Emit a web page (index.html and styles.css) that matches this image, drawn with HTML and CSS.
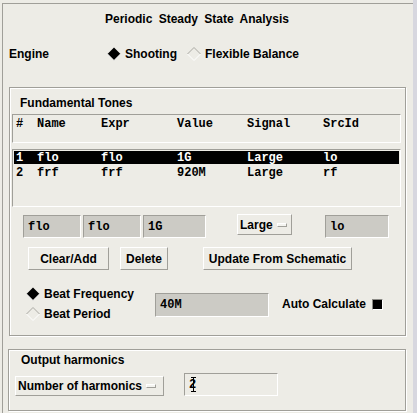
FILE: index.html
```html
<!DOCTYPE html>
<html>
<head>
<meta charset="utf-8">
<link rel="stylesheet" href="styles.css">
</head>
<body>
<div class="screen">
  <div class="main">
    <div class="panel">
      <div class="title">Periodic Steady State Analysis</div>
      <div class="engine">
        <span class="engine-label">Engine</span>
        <span class="radio">
          <svg class="dia" width="14" height="14" viewBox="0 0 14 14"><polygon points="7,0.5 13.5,7 7,13.5 0.5,7" fill="#000"/><polyline points="0.5,7 7,13.5 13.5,7" fill="none" stroke="#fff"/></svg>
          <span>Shooting</span>
        </span>
        <span class="radio flex">
          <svg class="dia" width="14" height="14" viewBox="0 0 14 14"><polyline points="0.5,7 7,0.5 13.5,7" fill="none" stroke="#a9a8a2"/><polyline points="0.5,7 7,13.5 13.5,7" fill="none" stroke="#fff"/></svg>
          <span>Flexible Balance</span>
        </span>
      </div>

      <div class="group tones">
        <div class="legend">Fundamental Tones</div>
        <div class="hdr sunken">
          <div class="trow"><span>#</span><span>Name</span><span>Expr</span><span>Value</span><span>Signal</span><span>SrcId</span></div>
        </div>
        <div class="list sunken">
          <div class="trow selrow"><span>1</span><span>flo</span><span>flo</span><span>1G</span><span>Large</span><span>lo</span></div>
          <div class="trow"><span>2</span><span>frf</span><span>frf</span><span>920M</span><span>Large</span><span>rf</span></div>
        </div>
        <div class="fields">
          <span class="field w58">flo</span>
          <span class="field w58">flo</span>
          <span class="field w63">1G</span>
          <span class="menu mlarge">Large<i class="ind"></i></span>
          <span class="field wlo">lo</span>
        </div>
        <div class="buttons">
          <span class="btn bclear">Clear/Add</span>
          <span class="btn bdel">Delete</span>
          <span class="btn bupd">Update From Schematic</span>
        </div>
        <div class="beat">
          <div class="beat-radios">
            <span class="radio">
              <svg class="dia" width="14" height="14" viewBox="0 0 14 14"><polygon points="7,0.5 13.5,7 7,13.5 0.5,7" fill="#000"/><polyline points="0.5,7 7,13.5 13.5,7" fill="none" stroke="#fff"/></svg>
              <span>Beat Frequency</span>
            </span>
            <span class="radio">
              <svg class="dia" width="14" height="14" viewBox="0 0 14 14"><polyline points="0.5,7 7,0.5 13.5,7" fill="none" stroke="#a9a8a2"/><polyline points="0.5,7 7,13.5 13.5,7" fill="none" stroke="#fff"/></svg>
              <span>Beat Period</span>
            </span>
          </div>
          <span class="field wbeat">40M</span>
          <span class="auto">Auto Calculate<i class="check"></i></span>
        </div>
      </div>

      <div class="group out">
        <div class="legend">Output harmonics</div>
        <div class="outrow">
          <span class="menu mharm">Number of harmonics<i class="ind"></i></span>
          <span class="field edit">2<i class="ibeam"></i></span>
        </div>
      </div>
    </div>
  </div>
  <div class="strip"></div>
</div>
</body>
</html>
```

FILE: styles.css
```css
* { box-sizing: border-box; }
html, body { margin: 0; padding: 0; }
body {
  width: 417px;
  height: 413px;
  overflow: hidden;
  background: #edece6;
  font-family: "Liberation Sans", Arial, sans-serif;
  font-weight: bold;
  font-size: 12px;
  color: #000;
}
.screen { display: flex; width: 417px; height: 413px; }
.main { width: 413px; height: 413px; padding: 3px 0 0 2px; }
.strip { flex: 1; background: #d7d7df; }
.panel {
  height: 410px;
  border-top: 1px solid #a09f99;
  border-left: 1px solid #a09f99;
}
.title {
  margin-top: 8px;
  height: 14px;
  line-height: 14px;
  padding-left: 102px;
  word-spacing: 3px;
  white-space: nowrap;
}
.engine {
  margin-top: 21px;
  height: 14px;
  line-height: 14px;
  display: flex;
  align-items: center;
  padding-left: 6px;
}
.engine-label { width: 98px; }
.radio { display: flex; align-items: center; gap: 4px; white-space: nowrap; }
.radio.flex { margin-left: 10px; }
.dia { display: block; flex: none; }

.group {
  margin-left: 6px;
  width: 397px;
  border: 1px solid #a09f99;
  box-shadow: 1px 1px 0 #fff, inset 1px 1px 0 #fff;
}
.tones { margin-top: 26px; height: 249px; }
.out { margin-top: 13px; height: 62px; margin-left: 5px; width: 398px; }
.legend { line-height: 14px; height: 14px; padding-left: 10px; }
.tones .legend { margin-top: 8px; }
.out .legend { margin-top: 3px; padding-left: 12px; }

.sunken {
  border-top: 1px solid #a09f99;
  border-left: 1px solid #a09f99;
  border-bottom: 1px solid #fff;
  border-right: 1px solid #fff;
  margin-left: 2px;
  width: 389px;
}
.hdr { margin-top: 4px; height: 29px; padding: 2px 0 0 1px; }
.list { margin-top: 6px; height: 58px; padding-top: 1px; }
.trow {
  display: grid;
  grid-template-columns: 21px 64px 76px 70px 76px 1fr;
  font-family: "Liberation Mono", "Courier New", monospace;
  font-weight: bold;
  font-size: 12px;
  height: 14px;
  line-height: 14px;
  padding-left: 2px;
  white-space: nowrap;
}
.list .trow { height: 13px; line-height: 14px; margin: 0 1px 2px 1px; padding-left: 2px; }
.selrow { background: #000; color: #fff; }

.fields { margin-top: 8px; height: 23px; display: flex; align-items: flex-start; padding-left: 13px; }
.field {
  display: flex;
  align-items: center;
  height: 23px;
  padding-left: 4px;
  background: #cccbc5;
  border-top: 1px solid #a09f99;
  border-left: 1px solid #a09f99;
  border-bottom: 1px solid #fff;
  border-right: 1px solid #fff;
  font-family: "Liberation Mono", "Courier New", monospace;
  font-weight: bold;
  font-size: 12px;
}
.w58 { width: 58px; margin-right: 2px; }
.w63 { width: 63px; }
.wlo { width: 64px; margin-left: 33px; }
.menu {
  display: flex;
  align-items: center;
  height: 21px;
  padding-left: 2px;
  border-top: 1px solid #fff;
  border-left: 1px solid #fff;
  border-bottom: 1px solid #a09f99;
  border-right: 1px solid #a09f99;
  white-space: nowrap;
}
.mlarge { width: 55px; margin-left: 31px; margin-top: -1px; }
.ind {
  display: block;
  width: 10px;
  height: 4px;
  margin-left: 4px;
  background: #f4f4f0;
  border-top: 1px solid #fff;
  border-left: 1px solid #fff;
  border-bottom: 1px solid #a09f99;
  border-right: 1px solid #a09f99;
}
.buttons { margin-top: 9px; height: 23px; display: flex; padding-left: 18px; }
.btn {
  display: flex;
  align-items: center;
  justify-content: center;
  height: 23px;
  border-top: 1px solid #fff;
  border-left: 1px solid #fff;
  border-bottom: 1px solid #a09f99;
  border-right: 1px solid #a09f99;
  white-space: nowrap;
}
.bclear { width: 81px; }
.bdel { width: 48px; margin-left: 11px; }
.bupd { width: 149px; margin-left: 35px; }

.beat { margin-top: 14px; display: flex; align-items: flex-start; padding-left: 16px; }
.beat-radios { width: 129px; display: flex; flex-direction: column; }
.beat-radios .radio { height: 20px; }
.wbeat { width: 114px; height: 24px; margin-top: 9px; }
.auto { display: flex; align-items: center; margin-left: 13px; margin-top: 13px; line-height: 14px; white-space: nowrap; }
.check {
  display: block;
  width: 11px;
  height: 11px;
  margin-left: 6px;
  background: #000;
  border-top: 1px solid #8c8b86;
  border-left: 1px solid #8c8b86;
  border-bottom: 1px solid #fff;
  border-right: 1px solid #fff;
}

.outrow { margin-top: 6px; display: flex; align-items: flex-start; padding-left: 6px; }
.mharm { width: 149px; height: 20px; margin-top: 3px; }
.edit { width: 94px; margin-left: 20px; background: #edece6; position: relative; }
.ibeam {
  position: absolute;
  left: 6px;
  top: 3px;
  width: 5px;
  height: 15px;
  border-top: 1px solid #000;
  border-bottom: 1px solid #000;
}
.ibeam::after {
  content: "";
  position: absolute;
  left: 2px;
  top: 0;
  width: 1px;
  height: 13px;
  background: #000;
}
```
